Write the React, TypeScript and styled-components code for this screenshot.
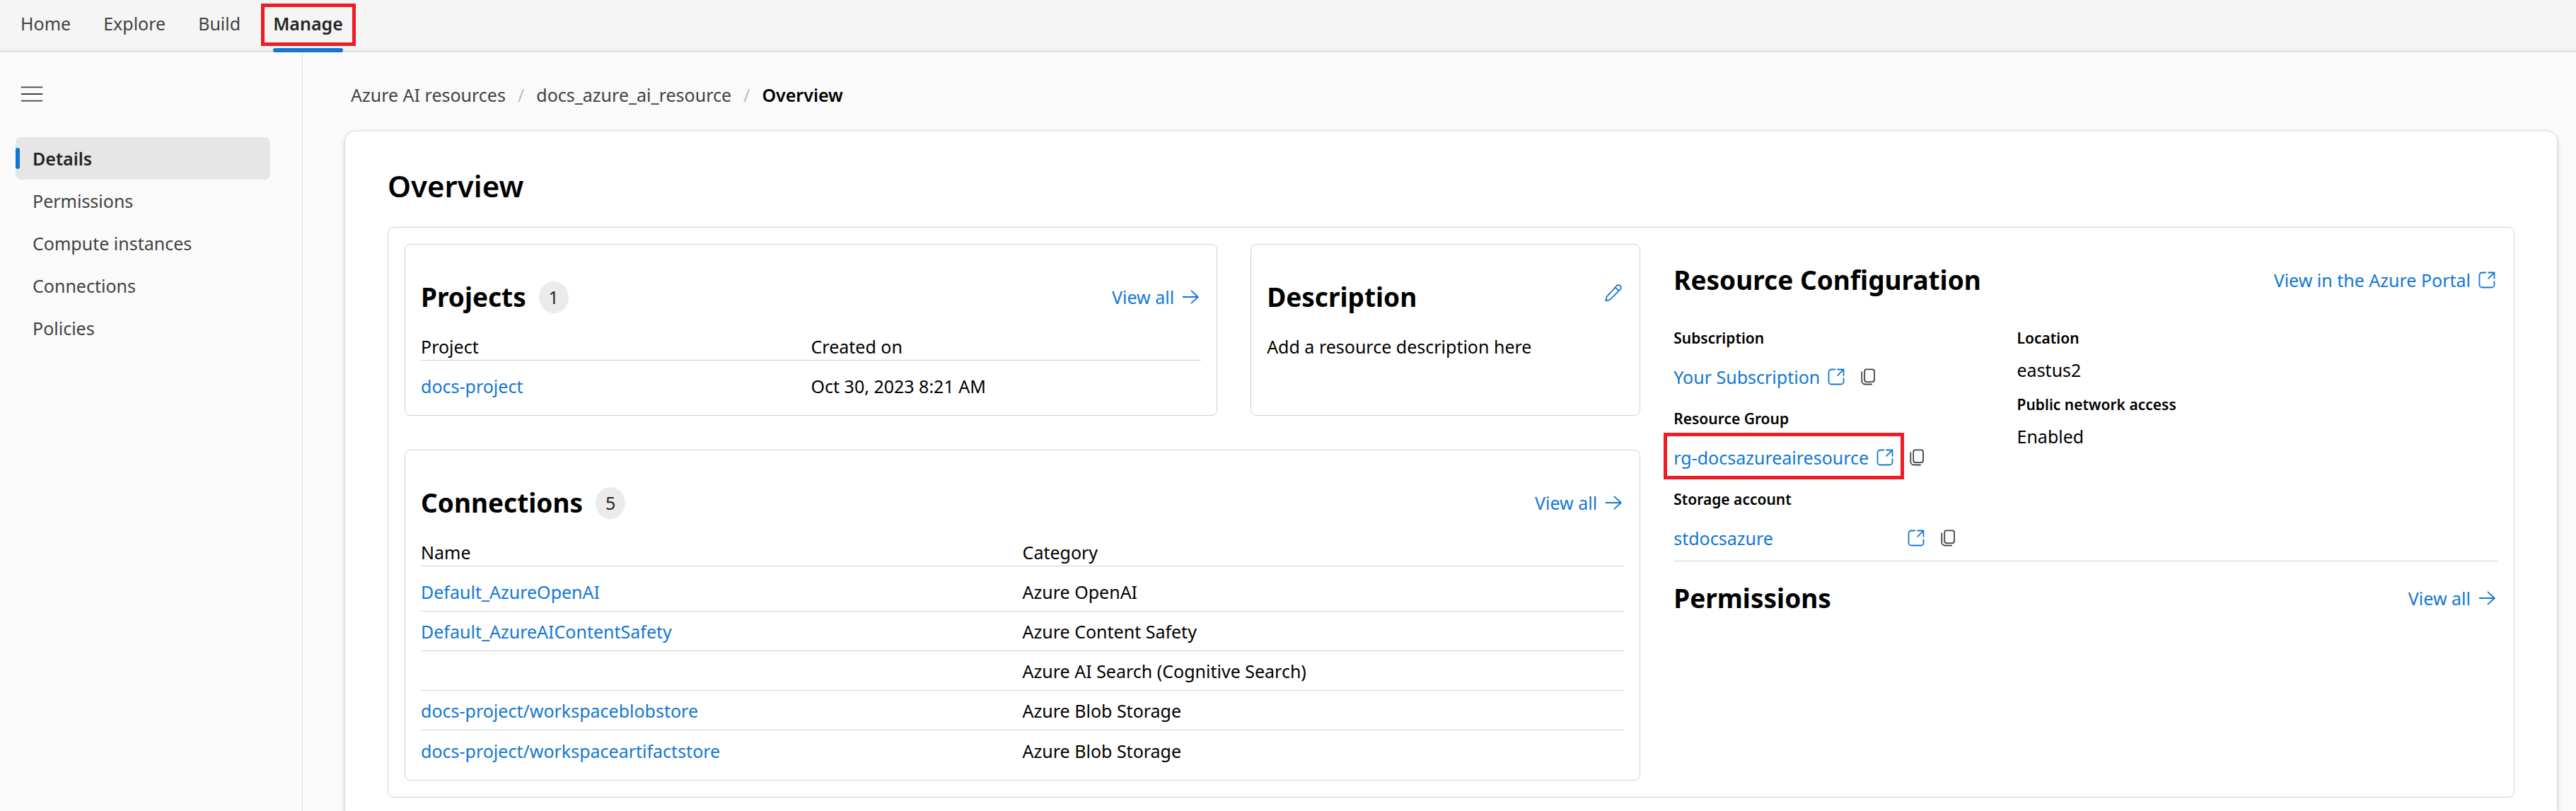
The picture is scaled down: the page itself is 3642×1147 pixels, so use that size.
import React from "react";
import styled, { createGlobalStyle, css } from "styled-components";

const color = {
  page: "#fafafa",
  surface: "#ffffff",
  header: "#f5f5f5",
  line: "#d1d1d1",
  softLine: "#e0e0e0",
  text: "#000000",
  muted: "#424242",
  strong: "#242424",
  brand: "#1177d3",
  selected: "#e6e6e6",
  badge: "#ebebeb",
  callout: "#ee1c25",
};

const GlobalStyle = createGlobalStyle`
  *, *::before, *::after { box-sizing: border-box; }
  body {
    margin: 0;
    background: ${color.page};
    color: ${color.text};
    font-family: "Noto Sans", "Open Sans", sans-serif;
    font-size: 25px;
    line-height: 36px;
  }
  h1, h2, p, dl, dd, dt, ul, ol { margin: 0; padding: 0; }
  ul, ol { list-style: none; }
  a { color: inherit; text-decoration: none; }
  button { font: inherit; color: inherit; background: none; border: 0; padding: 0; cursor: pointer; }
`;

const calloutRing = css`
  content: "";
  position: absolute;
  border: 5px solid ${color.callout};
  pointer-events: none;
`;

const Page = styled.div`
  min-height: 100vh;
  display: flex;
  flex-direction: column;
`;

const Header = styled.header`
  padding-left: 6px;
  background: ${color.header};
  box-shadow: inset 0 -6px 5px -4px rgba(0, 0, 0, 0.12);
`;

const Tabs = styled.ul`
  display: flex;
`;

const Tab = styled.a<{ $active?: boolean }>`
  position: relative;
  display: flex;
  align-items: center;
  height: 74px;
  padding: 0 23px 8px;
  color: ${(p) => (p.$active ? color.strong : color.muted)};
  font-weight: ${(p) => (p.$active ? 600 : 400)};

  ${(p) =>
    p.$active &&
    css`
      &::before {
        ${calloutRing}
        inset: 5px 5px 9px 6px;
      }
      &::after {
        content: "";
        position: absolute;
        left: 23px;
        right: 23px;
        bottom: 0;
        height: 6px;
        border-radius: 3px;
        background: ${color.brand};
      }
    `}
`;

const Body = styled.div`
  flex: 1;
  display: flex;
`;

const Sidebar = styled.nav`
  flex: none;
  width: 428px;
  padding: 29px 45px 0 22px;
  border-right: 1px solid ${color.softLine};
`;

const MenuButton = styled.button`
  display: flex;
  align-items: center;
  justify-content: center;
  width: 46px;
  height: 60px;
  margin-bottom: 31px;
  color: ${color.muted};
`;

const SideLink = styled.a<{ $active?: boolean }>`
  position: relative;
  display: flex;
  align-items: center;
  height: 60px;
  padding-left: 24px;
  border-radius: 8px;
  color: ${(p) => (p.$active ? color.strong : color.muted)};
  font-weight: ${(p) => (p.$active ? 600 : 400)};
  background: ${(p) => (p.$active ? color.selected : "transparent")};

  ${(p) =>
    p.$active &&
    css`
      &::before {
        content: "";
        position: absolute;
        left: 0;
        top: 15px;
        width: 6px;
        height: 30px;
        border-radius: 3px;
        background: ${color.brand};
      }
    `}
`;

const Main = styled.main`
  flex: 1;
  min-width: 0;
  display: flex;
  flex-direction: column;
  padding: 42px 27px 0 60px;
`;

const Crumbs = styled.ol`
  display: flex;
  gap: 17px;
  padding-left: 8px;
  margin-bottom: 34px;
  color: ${color.muted};
`;

const Crumb = styled.li`
  display: flex;
  gap: 17px;

  & + &::before {
    content: "/";
    color: #bdbdbd;
  }
  & [aria-current] {
    color: ${color.text};
    font-weight: 600;
  }
`;

const Sheet = styled.section`
  flex: 1;
  padding: 47px 60px 20px;
  border-radius: 15px 15px 0 0;
  background: ${color.surface};
  box-shadow: 0 0 4px rgba(0, 0, 0, 0.14), 0 4px 8px rgba(0, 0, 0, 0.14);
`;

const PageTitle = styled.h1`
  margin-bottom: 28px;
  font-size: 42px;
  line-height: 60px;
  font-weight: 600;
`;

const Panel = styled.div`
  display: grid;
  grid-template-columns: minmax(0, 3fr) minmax(0, 2fr);
  column-gap: 47px;
  padding: 23px;
  border: 1px solid ${color.line};
  border-radius: 8px;
`;

const Cards = styled.div`
  display: grid;
  grid-template-columns: repeat(3, minmax(0, 1fr));
  column-gap: 47px;
  row-gap: 48px;
`;

const Card = styled.section<{ $span: number }>`
  grid-column: span ${(p) => p.$span};
  padding: 49px 22px 14px;
  border: 1px solid ${color.line};
  border-radius: 8px;
`;

const TitleRow = styled.div<{ $top?: boolean }>`
  display: flex;
  align-items: ${(p) => (p.$top ? "flex-start" : "center")};
  justify-content: space-between;
`;

const CardHead = styled(TitleRow)`
  margin-bottom: 27px;
`;

const TitleGroup = styled.div`
  display: flex;
  align-items: center;
  gap: 18px;
`;

const Title = styled.h2`
  font-size: 37px;
  line-height: 50px;
  font-weight: 700;
`;

const Badge = styled.span`
  min-width: 42px;
  height: 45px;
  line-height: 45px;
  border-radius: 50%;
  background: ${color.badge};
  color: ${color.strong};
  text-align: center;
`;

const Link = styled.a<{ $called?: boolean }>`
  position: relative;
  display: inline-flex;
  align-items: center;
  gap: 8px;
  color: ${color.brand};

  ${(p) =>
    p.$called &&
    css`
      &::after {
        ${calloutRing}
        inset: -17px -12px -13px -14px;
      }
    `}
`;

const IconButton = styled.button<{ $tone: string; $height: number }>`
  display: flex;
  align-items: center;
  height: ${(p) => p.$height}px;
  color: ${(p) => p.$tone};
`;

const Table = styled.table`
  width: 100%;
  table-layout: fixed;
  border-spacing: 0;
  text-align: left;

  th {
    padding: 0 0 1px;
    font-weight: 400;
    border-bottom: 1px solid ${color.line};
  }
  td {
    height: 56px;
    padding: 10px 0 9px;
    border-bottom: 1px solid ${color.line};
  }
  tbody tr:first-child td {
    padding-top: 18px;
  }
  tbody tr:last-child td {
    border-bottom: 0;
  }
`;

const Details = styled.div`
  padding-top: 26px;
`;

const Fields = styled.div`
  display: grid;
  grid-template-columns: minmax(0, 5fr) minmax(0, 7fr);
  margin: 42px 0 27px;
  padding-bottom: 3px;
  border-bottom: 1px solid ${color.line};
`;

const FieldList = styled.dl`
  display: flex;
  flex-direction: column;
  gap: 15px;
`;

const Term = styled.dt`
  margin-bottom: 11px;
  font-size: 21px;
  line-height: 30px;
  font-weight: 600;
`;

const Value = styled.dd`
  display: flex;
  align-items: center;
  gap: 15px;
  min-height: 38px;
`;

const LinkText = styled.span<{ $wide?: boolean }>`
  min-width: ${(p) => (p.$wide ? "320px" : "0")};
`;

const Glyph = styled.svg.attrs({
  viewBox: "0 0 20 20",
  fill: "none",
  stroke: "currentColor",
  strokeLinecap: "round",
  strokeLinejoin: "round",
  "aria-hidden": true,
})`
  display: block;
  flex: none;
  width: 30px;
  height: 30px;
  stroke-width: 1.2;
`;

const ArrowIcon = () => (
  <Glyph>
    <path d="M3.1 10h14M11 4.2 17.2 10 11 15.8" />
  </Glyph>
);

const OpenIcon = () => (
  <Glyph>
    <path d="M8.8 3H5.5A2.5 2.5 0 0 0 3 5.5v9A2.5 2.5 0 0 0 5.5 17h9a2.5 2.5 0 0 0 2.5-2.5v-3" />
    <path d="M11.4 3H17v5.6M16.8 3.2 11.4 8.6" />
  </Glyph>
);

const CopyIcon = () => (
  <Glyph>
    <rect x="6.8" y="2.9" width="9.2" height="11.8" rx="1.8" />
    <path d="M4.2 5.4V14a3 3 0 0 0 3 3h6.2" />
  </Glyph>
);

const PencilIcon = () => (
  <Glyph>
    <path d="M13.1 3.5a2.4 2.4 0 0 1 3.4 3.4L7.2 16.2c-.3.3-.6.5-1 .6l-3.4.8.8-3.4c.1-.4.3-.7.6-1zM11.7 4.9l3.4 3.4" />
  </Glyph>
);

const MenuGlyph = styled(Glyph)`
  width: 32px;
  height: 32px;
`;

const MenuIcon = () => (
  <MenuGlyph>
    <path d="M1 4h18M1 10h18M1 16h18" />
  </MenuGlyph>
);

const tabs = ["Home", "Explore", "Build", "Manage"];
const sideItems = ["Details", "Permissions", "Compute instances", "Connections", "Policies"];

const connections = [
  { name: "Default_AzureOpenAI", category: "Azure OpenAI" },
  { name: "Default_AzureAIContentSafety", category: "Azure Content Safety" },
  { name: "", category: "Azure AI Search (Cognitive Search)" },
  { name: "docs-project/workspaceblobstore", category: "Azure Blob Storage" },
  { name: "docs-project/workspaceartifactstore", category: "Azure Blob Storage" },
];

const resources = [
  { label: "Subscription", value: "Your Subscription" },
  { label: "Resource Group", value: "rg-docsazureairesource", called: true },
  { label: "Storage account", value: "stdocsazure", wide: true },
];

const facts = [
  { label: "Location", value: "eastus2" },
  { label: "Public network access", value: "Enabled" },
];

const ViewAll = () => (
  <Link href="#">
    View all
    <ArrowIcon />
  </Link>
);

export default function App() {
  return (
    <Page>
      <GlobalStyle />
      <Header>
        <nav aria-label="Primary">
          <Tabs>
            {tabs.map((t) => (
              <li key={t}>
                <Tab href="#" $active={t === "Manage"}>
                  {t}
                </Tab>
              </li>
            ))}
          </Tabs>
        </nav>
      </Header>
      <Body>
        <Sidebar aria-label="Resource">
          <MenuButton type="button" aria-label="Toggle navigation">
            <MenuIcon />
          </MenuButton>
          <ul>
            {sideItems.map((s) => (
              <li key={s}>
                <SideLink href="#" $active={s === "Details"}>
                  {s}
                </SideLink>
              </li>
            ))}
          </ul>
        </Sidebar>
        <Main>
          <nav aria-label="Breadcrumb">
            <Crumbs>
              <Crumb>
                <a href="#">Azure AI resources</a>
              </Crumb>
              <Crumb>
                <a href="#">docs_azure_ai_resource</a>
              </Crumb>
              <Crumb>
                <span aria-current="page">Overview</span>
              </Crumb>
            </Crumbs>
          </nav>
          <Sheet>
            <PageTitle>Overview</PageTitle>
            <Panel>
              <Cards>
                <Card $span={2}>
                  <CardHead>
                    <TitleGroup>
                      <Title>Projects</Title>
                      <Badge>1</Badge>
                    </TitleGroup>
                    <ViewAll />
                  </CardHead>
                  <Table>
                    <thead>
                      <tr>
                        <th scope="col">Project</th>
                        <th scope="col">Created on</th>
                      </tr>
                    </thead>
                    <tbody>
                      <tr>
                        <td>
                          <Link href="#">docs-project</Link>
                        </td>
                        <td>Oct 30, 2023 8:21 AM</td>
                      </tr>
                    </tbody>
                  </Table>
                </Card>
                <Card $span={1}>
                  <CardHead $top>
                    <Title>Description</Title>
                    <IconButton type="button" aria-label="Edit description" $tone={color.brand} $height={38}>
                      <PencilIcon />
                    </IconButton>
                  </CardHead>
                  <p>Add a resource description here</p>
                </Card>
                <Card $span={3}>
                  <CardHead>
                    <TitleGroup>
                      <Title>Connections</Title>
                      <Badge>5</Badge>
                    </TitleGroup>
                    <ViewAll />
                  </CardHead>
                  <Table>
                    <thead>
                      <tr>
                        <th scope="col">Name</th>
                        <th scope="col">Category</th>
                      </tr>
                    </thead>
                    <tbody>
                      {connections.map((c, i) => (
                        <tr key={i}>
                          <td>{c.name && <Link href="#">{c.name}</Link>}</td>
                          <td>{c.category}</td>
                        </tr>
                      ))}
                    </tbody>
                  </Table>
                </Card>
              </Cards>
              <Details>
                <TitleRow>
                  <Title>Resource Configuration</Title>
                  <Link href="#">
                    View in the Azure Portal
                    <OpenIcon />
                  </Link>
                </TitleRow>
                <Fields>
                  <FieldList>
                    {resources.map((r) => (
                      <div key={r.label}>
                        <Term>{r.label}</Term>
                        <Value>
                          <Link href="#" $called={r.called}>
                            <LinkText $wide={r.wide}>{r.value}</LinkText>
                            <OpenIcon />
                          </Link>
                          <IconButton
                            type="button"
                            aria-label={`Copy ${r.label}`}
                            $tone={color.muted}
                            $height={58}
                          >
                            <CopyIcon />
                          </IconButton>
                        </Value>
                      </div>
                    ))}
                  </FieldList>
                  <FieldList>
                    {facts.map((f) => (
                      <div key={f.label}>
                        <Term>{f.label}</Term>
                        <Value>{f.value}</Value>
                      </div>
                    ))}
                  </FieldList>
                </Fields>
                <TitleRow>
                  <Title>Permissions</Title>
                  <ViewAll />
                </TitleRow>
              </Details>
            </Panel>
          </Sheet>
        </Main>
      </Body>
    </Page>
  );
}
